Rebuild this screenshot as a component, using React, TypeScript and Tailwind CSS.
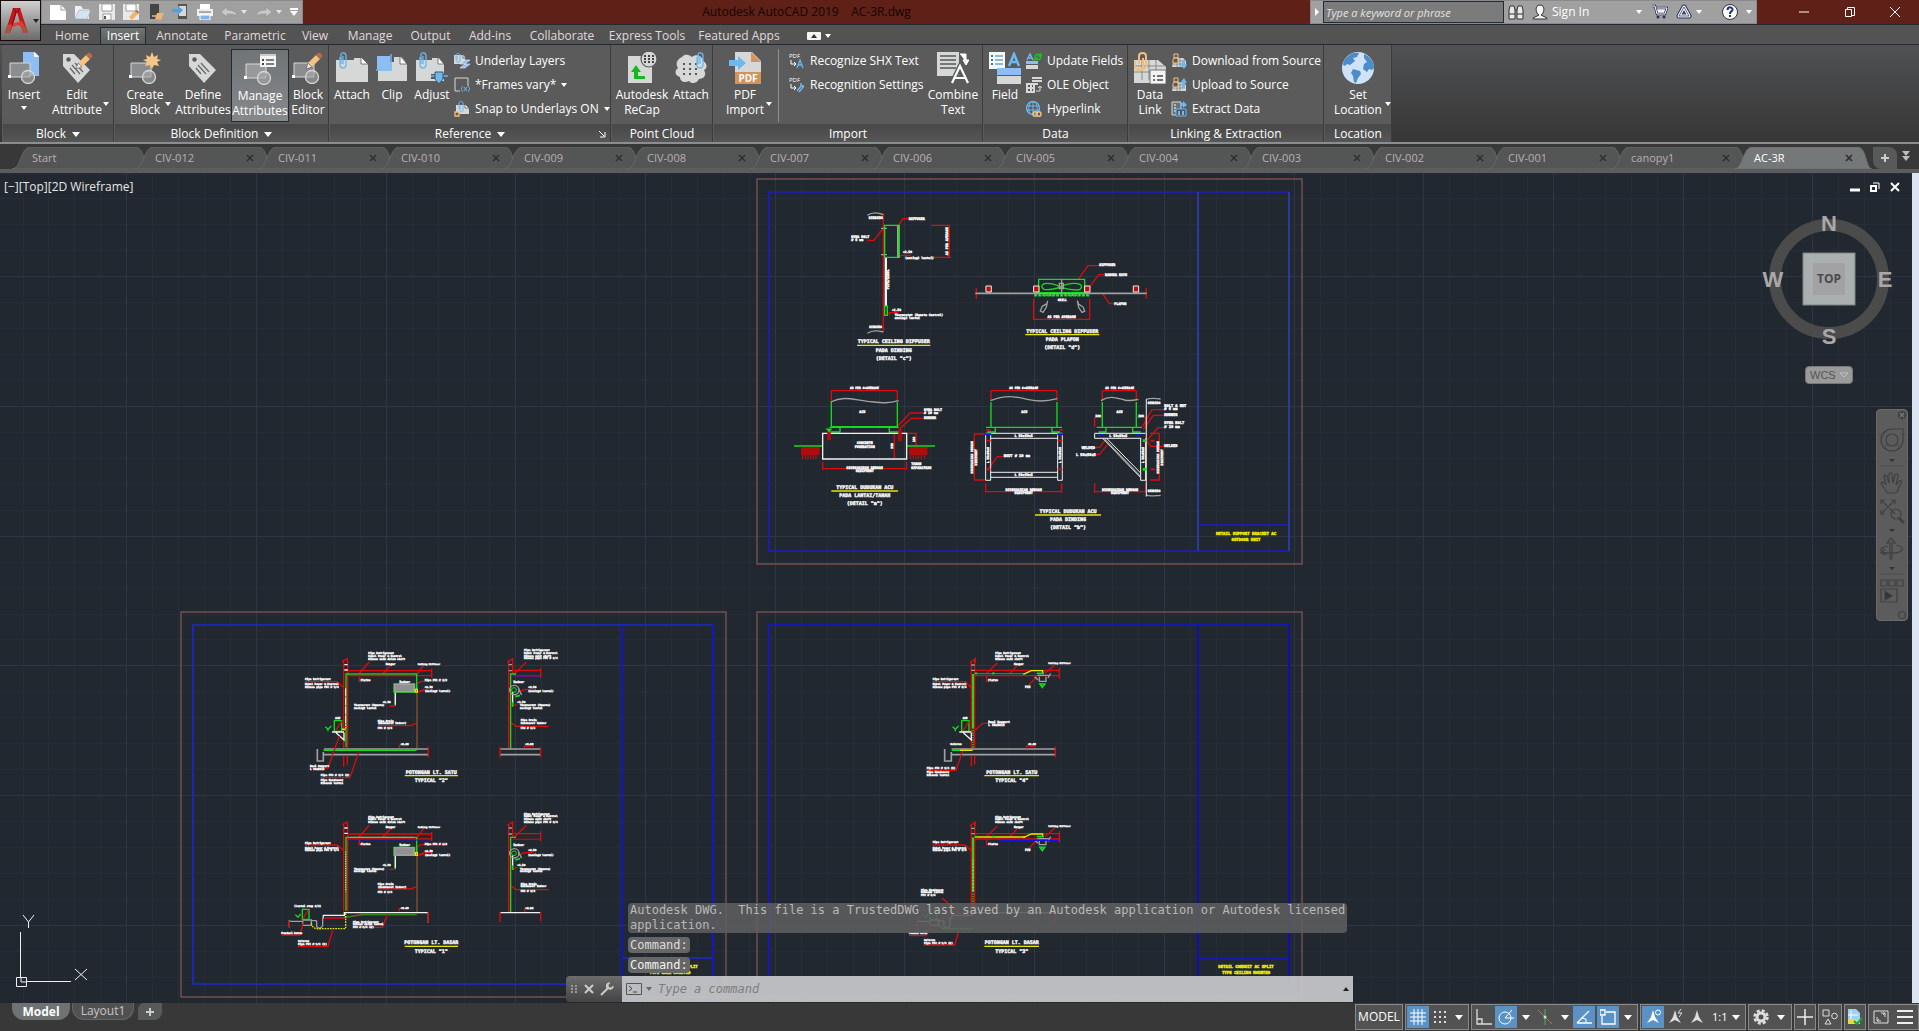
import React from "react";

type Kids = { children?: React.ReactNode };

/* ---------- shared icon bits ---------- */

const LIGHT = "#d6d8d8";
const SKY = "#6cb8f0";
const PEACH = "#f2be7c";

function Svg({ s = 32, children, className = "" }: Kids & { s?: number; className?: string }) {
  return (
    <svg width={s} height={s} viewBox={`0 0 ${s} ${s}`} fill="none" className={`shrink-0 ${className}`} aria-hidden="true">
      {children}
    </svg>
  );
}

function Caret({ className = "" }: { className?: string }) {
  return (
    <svg width="6" height="4" viewBox="0 0 6 4" className={`shrink-0 ${className}`} aria-hidden="true">
      <path d="M0 0h6L3 4z" fill="currentColor" />
    </svg>
  );
}

const Pencil = ({ x = 0, y = 0 }: { x?: number; y?: number }) => (
  <g transform={`translate(${x} ${y})`}>
    <path d="M2 11L10 3l4 4-8 8z" fill="#f5c27f" />
    <path d="M10 3l2-2c1.500-1.500 5.500 2 4 4l-2 2z" fill="#b9694a" />
    <path d="M2 11l4 4-6 2z" fill="#e6e6e6" stroke="#555" strokeWidth="0.6" />
  </g>
);
const Clip = ({ x = 0, y = 0 }: { x?: number; y?: number }) => (
  <path
    transform={`translate(${x} ${y})`}
    d="M5 4v8M2 5v8c0 4 6 4 6 0V4c0-4-5-4-5-1v9"
    stroke={SKY}
    strokeWidth="1.300"
  />
);
const BlockShape = ({ fill = "#8b8d8f" }: { fill?: string }) => (
  <>
    <path d="M2 11h20v14H2z" fill={fill} stroke={LIGHT} />
    <circle cx="20" cy="25" r="6.500" fill="#a6a8a9" fillOpacity="0.6" stroke={LIGHT} strokeWidth="1.300" />
    <path d="M0 23h3v3H0z" fill="#fff" />
  </>
);
const Tag = () => (
  <>
    <path d="M2 2h11l16 16-12 13L2 14z" fill={LIGHT} />
    <circle cx="7.500" cy="7.500" r="2.200" fill="#5a5a5a" />
    <path d="M11 13l8 9M14 11l8 9M9 16l5 6" stroke="#666" strokeWidth="1.200" />
  </>
);
const Sheet = ({ d, fold }: { d: string; fold: string }) => (
  <>
    <path d={d} fill={LIGHT} />
    <path d={fold} fill="#fff" stroke="#5a5a5a" strokeWidth="0.8" />
  </>
);

const icons = {
  insert: (
    <Svg>
      <path d="M15 0h12l4 4v20H15z" fill="#8ebdf4" />
      <path d="M26 0v5h5z" fill="#fff" />
      <BlockShape />
    </Svg>
  ),
  editAttr: (
    <Svg>
      <Tag />
      <Pencil x={15} y={0} />
    </Svg>
  ),
  create: (
    <Svg>
      <BlockShape />
      <path d="M23 0l2 5 4-2-1 4 4 1-4 2 2 4-5-1-2 4-2-4-5 1 2-4-4-2 4-1-1-4 4 2z" fill="#f6c684" />
    </Svg>
  ),
  define: (
    <Svg>
      <Tag />
    </Svg>
  ),
  manage: (
    <Svg>
      <BlockShape fill="#98999b" />
      <path d="M16 1h16v13H16z" fill="#f4f4f4" />
      <path d="M16 1h16v2H16z" fill="#c9cccd" />
      <path d="M18 6h2v2h-2zM18 10h2v2h-2z" fill="#444" />
      <path d="M22 7h8M22 11h8" stroke="#555" strokeWidth="1.300" />
    </Svg>
  ),
  editor: (
    <Svg>
      <BlockShape />
      <Pencil x={14} y={0} />
    </Svg>
  ),
  attach: (
    <Svg>
      <Sheet d="M0 8h18V6h8l6 6v18H0z" fold="M25 5v7h7z" />
      <Clip x={2} y={0} />
    </Svg>
  ),
  clip: (
    <Svg>
      <Sheet d="M2 10h16V5h8l5 7v17H2z" fold="M24 4v8h7z" />
      <path d="M1 4h13v13H1z" fill="#8ebdf4" />
      <path d="M15 2v16H0" stroke={SKY} strokeWidth="1.500" />
    </Svg>
  ),
  adjust: (
    <Svg>
      <Sheet d="M0 8h16V6h7l5 6v17H0z" fold="M22 5v7h6z" />
      <Clip x={2} y={0} />
      <path d="M15 22h17v5H15z" fill="#5a5a5a" />
      <path d="M15 24h17" stroke={SKY} strokeWidth="1.500" />
      <path d="M19 20h8v7l-4 5-4-5z" fill={SKY} stroke="#456" />
    </Svg>
  ),
  recap: (
    <Svg>
      <path d="M2 4h24v27H2z" fill={LIGHT} />
      <circle cx="23" cy="7" r="8" fill={LIGHT} stroke="#5a5a5a" strokeWidth="1.200" />
      <path d="M18 4h11M18 7h11M18 10h11" stroke="#444" strokeWidth="2" strokeDasharray="2 2" />
      <path d="M10 13l5 7h-3v4h7v3H8v-7H5z" fill="#16b81c" />
    </Svg>
  ),
  cloud: (
    <Svg>
      <path d="M7 5c3-4 8-2 10 0 4-4 11-1 11 4 4 2 5 7 1 9 3 5 0 9-5 9-2 5-8 5-10 2-4 2-9 1-9-4-5-1-6-6-2-9-3-4-1-9 4-11z" fill={LIGHT} />
      <path d="M8 12h17M8 17h17M8 22h17" stroke="#555" strokeWidth="2" strokeDasharray="2 4" />
      <Clip x={20} y={0} />
    </Svg>
  ),
  pdf: (
    <Svg>
      <path d="M6 0h17l9 9v23H6z" fill={LIGHT} />
      <path d="M22 0l10 10H22z" fill="#d5925a" />
      <path d="M6 20h26v12H6z" fill="#d5925a" />
      <path d="M0 8h9V4l8 7-8 7v-4H0z" fill={SKY} />
      <text x="19" y="30" textAnchor="middle" fontSize="10" fontWeight="700" fill="#fff">PDF</text>
    </Svg>
  ),
  combine: (
    <Svg>
      <path d="M0 0h22v24H0z" fill={LIGHT} />
      <path d="M3 4h16M3 8h16M3 12h16M3 16h16" stroke="#555" strokeWidth="1.300" />
      <path d="M23 2h6v8M26 8l3 5 3-5z" stroke="#fff" fill="#fff" />
      <path d="M15 31l8-17 8 17M18 26h10" stroke="#5a5a5a" strokeWidth="5" />
      <path d="M15 31l8-17 8 17M18 26h10" stroke="#fff" strokeWidth="2.200" />
    </Svg>
  ),
  field: (
    <Svg>
      <path d="M0 0h16v17H0z" fill="#f4f6f8" />
      <path d="M2 4h2M2 8h2M2 12h2" stroke="#2c78b8" strokeWidth="2" />
      <path d="M6 4h8M6 8h8M6 12h8" stroke="#2c78b8" strokeWidth="1.200" />
      <path d="M8 16h24v7H8z" fill="#8ebdf4" />
      <path d="M8 24h24v8H8z" fill={LIGHT} />
      <path d="M20 14l5-12 5 12M22 10h6" stroke={SKY} strokeWidth="2.500" />
    </Svg>
  ),
  dataLink: (
    <Svg>
      <path d="M0 8h24l8 7v16H0z" fill={LIGHT} />
      <path d="M0 14h30M0 20h30M8 8v20M15 8v20M22 8v20" stroke="#888" />
      <path d="M5 12V4c0-4 7-4 7 0v9c0 5-6 5-8 3M9 6v9c0 5-8 4-8-1V9" stroke={PEACH} strokeWidth="2" />
      <path d="M16 18h16v14H16z" fill="#f4f4f4" stroke="#555" strokeWidth="0.8" />
      <path d="M19 24h2M19 28h2M23 24h6M23 28h6" stroke="#444" strokeWidth="1.500" />
    </Svg>
  ),
  globe: (
    <Svg>
      <circle cx="16" cy="16" r="16" fill="#cfe2f7" />
      <path d="M4 6c4-5 9-6 13-5l-2 4-4 1 2 3-5 4-3-1-2 2-2-1c0-3 1-5 3-7zM22 2c6 2 10 8 10 14l-2 2-3-1-2 3-4-3 1-5 3-2-3-4zM11 17l7 2 1 3-3 4-2 5-2-1-1-6-2-3z" fill="#4b8dcb" />
    </Svg>
  ),
  underlay: (
    <Svg s={16}>
      <Sheet d="M0 2h9l2 3v6H0z" fold="M9 1v4h3z" />
      <path d="M3 3v5c0 2 3 2 3 0V2c0-2-4-2-4 0v5" stroke={SKY} />
      <path d="M6 11l5-4h5l-5 4zM6 15l5-4h5l-5 4z" fill="#8ebdf4" stroke="#e8f1fb" strokeWidth="0.6" />
    </Svg>
  ),
  frames: (
    <Svg s={16}>
      <path d="M14 9V1H1v13h5" stroke={LIGHT} />
      <path d="M9 9c-2 2-2 4 0 6M14 9c2 2 2 4 0 6M10 10l3 4M13 10l-3 4" stroke={SKY} />
    </Svg>
  ),
  snap: (
    <Svg s={16}>
      <Sheet d="M2 4h9l4 3v6H2z" fold="M11 3v4h4z" />
      <path d="M6 4v5c0 2 3 2 3 0V2c0-2-4-2-4 0v6" stroke={SKY} />
      <path d="M1 11h4v4H1z" fill="#5a5a5a" stroke={PEACH} strokeWidth="1.300" />
    </Svg>
  ),
  shx: (
    <Svg s={16}>
      <text x="0" y="5" fontSize="6" fill="#fff">PDF</text>
      <path d="M2 7v4h4M5 9l2 2-2 2" stroke="#fff" />
      <path d="M8 15l3-8 3 8M9 12h4" stroke={SKY} strokeWidth="1.300" />
    </Svg>
  ),
  recSet: (
    <Svg s={16}>
      <text x="0" y="5" fontSize="6" fill="#fff">PDF</text>
      <path d="M2 7v4h4M5 9l2 2-2 2" stroke="#fff" />
      <path d="M8 14l5-6M12 6v3h3M10 15l5-6" stroke={SKY} strokeWidth="1.500" />
    </Svg>
  ),
  update: (
    <Svg s={16}>
      <path d="M1 7l3-6 3 6M2 5h4" stroke={SKY} strokeWidth="1.500" />
      <path d="M9 4c1-4 5-3 6-1M15 4c-1 4-5 3-6 1M15 0v3h-3M9 8V5h3" stroke="#16c81c" strokeWidth="1.300" />
      <path d="M0 8h12v3H0z" fill="#8ebdf4" />
      <path d="M0 12h12v4H0z" fill={LIGHT} />
    </Svg>
  ),
  ole: (
    <Svg s={16}>
      <path d="M6 1h10M6 4h10M6 7h6" stroke={LIGHT} strokeWidth="2" />
      <path d="M0 6h9v10H0z" fill={LIGHT} />
      <path d="M2 9h2M6 9h1M2 13h2M6 13h1" stroke="#555" strokeWidth="2" />
      <path d="M10 14h4V9M12 11l2-2 2 2" stroke={LIGHT} />
    </Svg>
  ),
  hyper: (
    <Svg s={16}>
      <circle cx="7" cy="7" r="6.500" stroke={SKY} strokeWidth="1.300" />
      <path d="M1 5h12M1 9h12M7 1v13M5 1c-3 4-3 9 0 13M9 1c3 4 3 9 0 13" stroke={SKY} />
      <path d="M7 13c0-3 4-3 4 0s-4 3-4 0zM11 13c0-3 4-3 4 0s-4 3-4 0z" stroke={PEACH} strokeWidth="1.500" />
    </Svg>
  ),
  down: (
    <Svg s={16}>
      <path d="M3 5h9l3 3v6H1z" fill={LIGHT} />
      <path d="M2 8h12M2 11h12M6 5v9M9 5v9" stroke="#777" strokeWidth="0.7" />
      <path d="M3 1h4v4H3zM3 5h4v5H2V7z" fill="#5a5a5a" stroke={PEACH} />
      <path d="M11 7h3v4h2l-3 5-4-5h2z" fill={SKY} />
    </Svg>
  ),
  up: (
    <Svg s={16}>
      <path d="M3 5h9l3 3v6H1z" fill={LIGHT} />
      <path d="M2 8h12M2 11h12M6 5v9M9 5v9" stroke="#777" strokeWidth="0.7" />
      <path d="M3 1h4v4H3zM3 5h4v5H2V7z" fill="#5a5a5a" stroke={PEACH} />
      <path d="M11 11h3V6h2l-3-5-4 5h2z" fill={SKY} />
    </Svg>
  ),
  extract: (
    <Svg s={16}>
      <path d="M1 1h9v13H1z" fill="#6d7274" stroke={LIGHT} />
      <path d="M9 2h3V0l4 4-4 3V5H9z" fill={SKY} />
      <path d="M3 4h2M3 7h2M3 10h2" stroke="#fff" />
      <path d="M5 8h10v7H5z" fill="#3a5a78" stroke={SKY} />
      <path d="M7 11h2M11 11h2M7 13h2M11 13h2" stroke="#fff" />
    </Svg>
  ),
};

/* ---------- title bar ---------- */

function QuickAccess() {
  const items: [string, React.ReactNode][] = [
    ["New", <><path d="M0 1h11l5 5v10H0z" fill="#fff" /><path d="M11 1v5h5" stroke="#999" /></>],
    ["Open", <><path d="M1 15V2h6l2 3h6v10z" fill="#f2f2f2" /><path d="M1 15l4-9h12l-4 9z" fill="#d3e4f5" stroke="#8a9aaa" strokeWidth="0.5" /></>],
    ["Save", <><path d="M0 0h16v16H0z" fill="#e9e9e9" /><path d="M3 0h10v7H3zM4 10h8v6H4z" fill="#fff" stroke="#888" strokeWidth="0.8" /><path d="M5 12h2v3H5z" fill="#555" /></>],
    ["Save As", <><path d="M0 0h16v16H0z" fill="#e9e9e9" /><path d="M3 0h10v7H3z" fill="#fff" stroke="#888" strokeWidth="0.8" /><path d="M6 13l6-6 3 3-6 6z" fill="#f0b46c" /><path d="M12 7l2-1 2 2-1 2z" fill="#b9694a" /></>],
    ["Open from Mobile", <><path d="M2 0h9v15H2z" fill="#444" /><path d="M4 12h5" stroke="#fff" /><path d="M7 15l2-6h7l-3 7z" fill="#f0b46c" /></>],
    ["Save to Mobile", <><path d="M6 0h9v15H6z" fill="#555" /><path d="M7 2h7v10H7z" fill="#d8d8d8" /><path d="M0 5h6V2l5 4-5 5V8H0z" fill="#4aa3e8" /></>],
    ["Plot", <><path d="M3 0h10v5H3z" fill="#fff" /><path d="M0 5h16v7H0z" fill="#efefef" /><path d="M2 8h12" stroke="#666" /><path d="M3 11h10v5H3z" fill="#7fb2ee" stroke="#fff" /></>],
    ["Undo", <path d="M0 8l6-5v3c6 0 9 2 10 6-3-2-6-2-10-2v3z" fill="#c9c9c9" stroke="#888" strokeWidth="0.5" />],
    ["Redo", <path d="M16 8l-6-5v3c-6 0-9 2-10 6 3-2 6-2 10-2v3z" fill="#c9c9c9" stroke="#888" strokeWidth="0.5" />],
  ];
  return (
    <div className="flex h-6 w-[262px] items-center justify-between border border-[#8a8a8a] bg-[#a0a0a0] pl-2 pr-1 text-white">
      {items.map(([label, art]) => (
        <button key={label} aria-label={label} className="flex items-center gap-1">
          <Svg s={16}>{art}</Svg>
          {(label === "Undo" || label === "Redo") && <Caret className="text-[#e2e2e2]" />}
        </button>
      ))}
      <button aria-label="Customize">
        <Svg s={8}><path d="M0 0h8v2H0zM0 3h8L4 8z" fill="#fff" /></Svg>
      </button>
    </div>
  );
}

function TitleBar() {
  return (
    <header className="flex h-6 bg-[#5e2017] pl-[41px]">
      <QuickAccess />
      <h1 className="flex flex-1 items-center justify-center text-xs whitespace-pre text-[#140503]">
        Autodesk AutoCAD 2019{"    "}AC-3R.dwg
      </h1>
      <div className="flex h-6 w-[447px] items-center border border-[#8a8a8a] bg-[#a0a0a0] text-white">
        <Svg s={12}><path d="M4 2v8l4-4z" fill="#fff" /></Svg>
        <input aria-label="Search" placeholder="Type a keyword or phrase" className="h-[22px] w-[181px] border border-[#222a33] bg-[#7b7b7b] px-0.5 text-[11px] italic text-white outline-none placeholder:text-[#e2e2e2]" />
        <button aria-label="Find" className="ml-1">
          <Svg s={16}><path d="M2 2h4l1 4v9H1V6zM10 2h4l1 4v9H9V6z" fill="#e8e8e8" stroke="#333" /><path d="M1 10h6M9 10h6M7 6h2" stroke="#333" /></Svg>
        </button>
        <button className="ml-2 flex flex-1 items-center gap-1 text-xs">
          <Svg s={16}><path d="M8 1c6 0 4 9 1 10l6 3v1H1v-1l6-3C4 10 2 1 8 1z" fill="#f4f4f4" stroke="#333" /></Svg>
          Sign In
          <Caret className="ml-auto" />
        </button>
        <button aria-label="App Store" className="ml-2.5">
          <Svg s={16}><path d="M0 2h3l2 8h8l2-6H5" stroke="#26305a" strokeWidth="2.500" fill="#f4f4f4" /><path d="M0 2h3l2 8h8l2-6H5" stroke="#fff" /><circle cx="6" cy="13" r="1.500" fill="#26305a" /><circle cx="12" cy="13" r="1.500" fill="#26305a" /></Svg>
        </button>
        <button aria-label="Autodesk" className="ml-2 flex items-center gap-1">
          <Svg s={16}><path d="M8 3l5 9H3z" stroke="#26305a" strokeWidth="5" strokeLinejoin="round" /><path d="M8 3l5 9H3z" stroke="#f4f4f4" strokeWidth="3" strokeLinejoin="round" /><path d="M8 3l5 9H3z" stroke="#26305a" strokeWidth="0.7" /></Svg>
          <Caret />
        </button>
        <button aria-label="Help" className="ml-5 mr-1 flex items-center gap-2">
          <Svg s={16}><circle cx="8" cy="8" r="7.500" fill="#fff" stroke="#333" /><path d="M5.500 6c0-4 5.500-3 5 0-.5 1.500-2.500 1.500-2.500 4M8 11v2" stroke="#1b2d7c" strokeWidth="2" /></Svg>
          <Caret />
        </button>
      </div>
      <div className="flex w-[162px] items-center justify-between pl-[41px] pr-[18px] text-white">
        <button aria-label="Minimize"><Svg s={12}><path d="M1 6h10" stroke="#fff" /></Svg></button>
        <button aria-label="Restore"><Svg s={12}><path d="M1.500 3.500h6v7h-6zM3.500 3.500v-2h7v8h-3" stroke="#fff" /></Svg></button>
        <button aria-label="Close"><Svg s={12}><path d="M1 1l10 10M11 1L1 11" stroke="#fff" /></Svg></button>
      </div>
    </header>
  );
}

function AppButton() {
  return (
    <button aria-label="Application menu" className="absolute left-0 top-0 flex h-[41px] w-[41px] items-center border border-[#1a0a08] bg-linear-to-b from-[#d0d0d0] to-[#6c6c6c] pl-1">
      <svg width="24" height="28" viewBox="0 0 24 28" aria-hidden="true">
        <path d="M0 26L8 1h7l8 25h-5L12 5 5 26z" fill="#c5161c" />
        <path d="M3 18l14-4 3 6-3 1-4-3-10 4z" fill="#e03a33" />
        <path d="M0 26l3-8 3 2-1 6zM16 20l4-1 3 7h-5z" fill="#a8553d" />
        <path d="M8 1l3 4-4 14M15 1l-3 5" stroke="#7c0d10" fill="none" />
      </svg>
      <Caret className="ml-1 text-[#222]" />
    </button>
  );
}

/* ---------- ribbon ---------- */

const menuTabs: [string, string][] = [
  ["Home", "w-[56px]"], ["Insert", "w-[46px]"], ["Annotate", "w-[72px]"], ["Parametric", "w-[74px]"], ["View", "w-[46px]"],
  ["Manage", "w-[64px]"], ["Output", "w-[57px]"], ["Add-ins", "w-[62px]"], ["Collaborate", "w-[82px]"], ["Express Tools", "w-[88px]"], ["Featured Apps", "w-[96px]"],
];

function MenuTabs() {
  return (
    <nav className="flex h-5 items-end border-t border-[#222a33] bg-[#535353] pl-[44px] text-xs text-[#e0d8dc]">
      {menuTabs.map(([t, w]) => (
        <button
          key={t}
          className={`${w} h-[17px] leading-4 whitespace-nowrap ${t === "Insert" ? "border border-b-0 border-[#222a33] bg-linear-to-b from-[#6f7474] to-[#5c5c5c] text-white" : ""}`}
        >
          {t}
        </button>
      ))}
      <button aria-label="Ribbon display" className="ml-5 flex h-[17px] items-center gap-1 text-white">
        <Svg s={14}><rect x="0" y="3" width="14" height="8" rx="1" fill="#f4f4f4" /><path d="M4 9h6L7 5z" fill="#333" /></Svg>
        <Caret />
      </button>
    </nav>
  );
}

function Big({ icon, lines, w, caret, active, below }: { icon: React.ReactNode; lines: string[]; w: string; caret?: string; active?: boolean; below?: boolean }) {
  return (
    <button className={`relative flex ${w} mt-1 h-[73px] shrink-0 flex-col items-center whitespace-nowrap pt-[3px] leading-[15px] ${active ? "border border-[#222a33] bg-linear-to-b from-[#707476] to-[#86898b]" : ""}`}>
      {icon}
      <span className="mt-[3px]">{lines[0]}</span>
      {lines[1] && <span>{lines[1]}</span>}
      {below && <Caret className="mt-1" />}
      {caret && <Caret className={`absolute top-[53px] ${caret}`} />}
    </button>
  );
}

function Row({ icon, label, caret }: { icon: React.ReactNode; label: string; caret?: boolean }) {
  return (
    <button className="flex h-6 items-center gap-[5px] whitespace-nowrap">
      {icon}
      {label}
      {caret && <Caret />}
    </button>
  );
}

function Panel({ title, w, arrow, corner, children }: Kids & { title: string; w: string; arrow?: boolean; corner?: boolean }) {
  return (
    <section className={`${w} flex shrink-0 flex-col border-r border-[#3c3c3c] bg-[#5b5b5b] pl-px`}>
      <div className="flex h-[79px]">{children}</div>
      <h2 className="relative flex flex-1 items-center justify-center gap-1.5 bg-linear-to-b from-[#484848] to-[#565656] pt-0.5">
        {title}
        {arrow && <Svg s={8}><path d="M0 2h8L4 7z" fill="#fff" /></Svg>}
        {corner && <Svg s={8} className="absolute right-1"><path d="M1 1l5 5M7 2v5H2" stroke="#fff" /></Svg>}
      </h2>
    </section>
  );
}

const List = ({ children }: Kids) => <div className="flex flex-col pt-1">{children}</div>;

function Ribbon() {
  return (
    <div className="flex h-[100px] border-t border-b-2 border-[#222a33] border-b-[#8a8e90] bg-linear-to-b from-[#505253] to-[#363636] pl-0.5 text-xs text-white">
      <Panel title="Block" w="w-[112px]" arrow>
        <Big w="w-[42px]" icon={icons.insert} lines={["Insert"]} below />
        <Big w="w-[64px]" icon={icons.editAttr} lines={["Edit", "Attribute"]} caret="right-0" />
      </Panel>
      <Panel title="Block Definition" w="w-[215px]" arrow>
        <Big w="w-[60px]" icon={icons.create} lines={["Create", "Block"]} caret="right-1" />
        <Big w="w-[56px]" icon={icons.define} lines={["Define", "Attributes"]} />
        <Big w="w-[58px]" icon={icons.manage} lines={["Manage", "Attributes"]} active />
        <Big w="w-[38px]" icon={icons.editor} lines={["Block", "Editor"]} />
      </Panel>
      <Panel title="Reference" w="w-[282px]" arrow corner>
        <Big w="w-[44px]" icon={icons.attach} lines={["Attach"]} />
        <Big w="w-[36px]" icon={icons.clip} lines={["Clip"]} />
        <Big w="w-[44px]" icon={icons.adjust} lines={["Adjust"]} />
        <List>
          <Row icon={icons.underlay} label="Underlay Layers" />
          <Row icon={icons.frames} label="*Frames vary*" caret />
          <Row icon={icons.snap} label="Snap to Underlays ON" caret />
        </List>
      </Panel>
      <Panel title="Point Cloud" w="w-[102px]">
        <Big w="w-[60px]" icon={icons.recap} lines={["Autodesk", "ReCap"]} />
        <Big w="w-[38px]" icon={icons.cloud} lines={["Attach"]} />
      </Panel>
      <Panel title="Import" w="w-[270px]">
        <Big w="w-[62px]" icon={icons.pdf} lines={["PDF", "Import"]} caret="right-1" />
        <div className="ml-0.5 mt-1 mr-2.5 h-[73px] w-px bg-[#909090]" />
        <List>
          <Row icon={icons.shx} label="Recognize SHX Text" />
          <Row icon={icons.recSet} label="Recognition Settings" />
        </List>
        <div className="flex-1" />
        <Big w="w-[58px]" icon={icons.combine} lines={["Combine", "Text"]} />
      </Panel>
      <Panel title="Data" w="w-[145px]">
        <Big w="w-[42px]" icon={icons.field} lines={["Field"]} />
        <List>
          <Row icon={icons.update} label="Update Fields" />
          <Row icon={icons.ole} label="OLE Object" />
          <Row icon={icons.hyper} label="Hyperlink" />
        </List>
      </Panel>
      <Panel title="Linking & Extraction" w="w-[196px]">
        <Big w="w-[42px]" icon={icons.dataLink} lines={["Data", "Link"]} />
        <List>
          <Row icon={icons.down} label="Download from Source" />
          <Row icon={icons.up} label="Upload to Source" />
          <Row icon={icons.extract} label="Extract  Data" />
        </List>
      </Panel>
      <Panel title="Location" w="w-[68px]">
        <Big w="w-[66px]" icon={icons.globe} lines={["Set", "Location"]} caret="right-0" />
      </Panel>
    </div>
  );
}

/* ---------- drawing file tabs ---------- */

const files = ["Start", "CIV-012", "CIV-011", "CIV-010", "CIV-009", "CIV-008", "CIV-007", "CIV-006", "CIV-005", "CIV-004", "CIV-003", "CIV-002", "CIV-001", "canopy1", "AC-3R"];

function FileTabs() {
  return (
    <div className="flex h-[29px] items-start border-b-4 border-[#5c5c5c] bg-[#383838] pt-[3px] pl-5 text-[11px]">
      {files.map((f) => {
        const on = f === "AC-3R";
        return (
          <div key={f} className={`relative flex h-[22px] w-[123px] min-w-0 items-center justify-between px-3 ${on ? "text-white" : "text-[#bcaeb2]"}`}>
            <svg className="absolute -left-2 top-0 h-full w-[138px]" viewBox="0 0 134 22" preserveAspectRatio="none" aria-hidden="true">
              <path d="M0 22C9 22 8 0 18 0H120C129 0 128 22 134 22z" fill={on ? "#747878" : "#545656"} stroke="#6a6d6d" strokeWidth="0.8" />
            </svg>
            <button className="relative">{f}</button>
            {f !== "Start" && (
              <button aria-label={`Close ${f}`} className="relative">
                <Svg s={8}><path d="M1 1l6 6M7 1L1 7" stroke="#2e2e2e" strokeWidth="1.600" /></Svg>
              </button>
            )}
          </div>
        );
      })}
      <button aria-label="New tab" className="ml-2 flex h-[22px] w-6 items-center justify-center rounded-tr-lg rounded-bl-lg bg-[#585a5a]">
        <Svg s={8}><path d="M4 0v8M0 4h8" stroke="#ccc" strokeWidth="2" /></Svg>
      </button>
      <button aria-label="More tabs" className="ml-auto mr-2 pt-1">
        <Svg s={10}><path d="M1 0h8L5 5zM1 5h8l-4 5z" fill="#bbb" /></Svg>
      </button>
    </div>
  );
}

/* ---------- CAD geometry ---------- */

const R = "#dc0c0c";
const G = "#14dc1c";
const W = "#f2f2f2";
const Y = "#e6e600";
const B = "#1414e0";
const GR = "#a0a0a0";
const BR = "#7b5050";

function P({ d, c = R, w = 4, f = "none", dash }: { d: string; c?: string; w?: number; f?: string; dash?: string }) {
  return <path d={d} stroke={c} strokeWidth={w} fill={f} strokeDasharray={dash} />;
}
function T({ x, y, t, s = 10, c = W, a = "start" }: { x: number; y: number; t: string | string[]; s?: number; c?: string; a?: "start" | "middle" }) {
  const lines = Array.isArray(t) ? t : [t];
  return (
    <>
      {lines.map((l, i) => (
        <text key={i} x={x} y={y + i * s} fontSize={s} fontWeight="700" fill={c} stroke={c} strokeWidth="1.400" textAnchor={a} fontFamily="'DejaVu Sans Mono', monospace">
          {l}
        </text>
      ))}
    </>
  );
}
function V({ x, y, t, s = 9 }: { x: number; y: number; t: string; s?: number }) {
  return (
    <g transform={`translate(${x} ${y}) rotate(-90)`}>
      <T x={0} y={0} t={t} s={s} a="middle" />
    </g>
  );
}
function Title({ x, y, a, b, c, w }: { x: number; y: number; a: string; b: string; c?: string; w: number }) {
  return (
    <>
      <T x={x} y={y} t={a} s={15} a="middle" />
      <P d={`M${x - w / 2} ${y + 6}h${w}`} c={Y} />
      <T x={x} y={y + 25} t={b} s={15} a="middle" />
      {c && <T x={x} y={y + 49} t={c} s={15} a="middle" />}
    </>
  );
}

function Frame({ x, y, caption, c = B, side = B }: { x: number; y: number; caption: string[]; c?: string; side?: string }) {
  return (
    <g transform={`translate(${x} ${y})`}>
      <rect width="545" height="385" fill="none" stroke={BR} strokeWidth="1.400" />
      <path d="M12 13H532V372H12zM441 346h91" fill="none" stroke={c} strokeWidth="1.600" />
      <path d="M441 13v359M532 13v359" stroke={side} strokeWidth="2" />
      <g transform="translate(489 356)">
        {caption.map((l, i) => (
          <text key={l} y={i * 6} fontSize="4" fontWeight="700" fill={Y} stroke={Y} strokeWidth="0.5" textAnchor="middle" fontFamily="'DejaVu Sans Mono', monospace">{l}</text>
        ))}
      </g>
    </g>
  );
}

function Foundation() {
  return (
    <>
      <P d="M154 602h198M154 602v30M352 602v30M128 815v24M380 815v24M128 836h252M343 732v74M408 732v36M360 730h50M430 669h-40l-42 45M430 685h-36l-36 32" />
      <P d="M152 636c40-20 70-6 110-2s60 8 94-2" c={GR} />
      <P d="M154 636v74h198v-74M148 712h208M150 726h30v-14M328 712v14h30M42 768h86M380 768h85" c={G} />
      <P d="M128 730h252v77H128z" c={W} w={4} />
      <P d="M64 772h54v22H64zM388 772h54v22h-54zM142 722h10v28h-10zM355 718h10v34h-10z" f="#b00c0c" w={1} />
      <P d="M68 794v14M76 794v14M84 794v14M92 794v14M100 794v14M108 794v12M392 794v14M400 794v14M408 794v14M416 794v14M424 794v14M434 794v12" w={3} />
      <P d="M142 718h10l-4 6z" c={G} w={5} />
      <T x={253} y={598} t="AS PER 4+AVERAGE" s={9} a="middle" />
      <T x={247} y={668} t="ACU" s={10} a="middle" />
      <T x={254} y={763} t={["CONCRETE", "FOUNDATION"]} s={10} a="middle" />
      <T x={254} y={836} t={["DISESUAIKAN DENGAN", "EQUIPMENT"]} s={10} a="middle" />
      <T x={432} y={662} t={["DYNA BOLT", "# 10 mm"]} s={10} />
      <T x={432} y={688} t="RUBBER" s={10} />
      <T x={394} y={826} t={["TANAH", "DIPADATKAN"]} s={10} />
      <V x={340} y={768} t="300" />
      <V x={405} y={748} t="100" />
      <Title x={254} y={897} a="TYPICAL DUDUKAN ACU" b="PADA LANTAI/TANAH" c={'(DETAIL "a")'} w={200} />
    </>
  );
}

function Bracket() {
  return (
    <>
      <P d="M633 602h198M633 602v30M831 602v30M583 732v138M583 732h32M583 870h32M617 880v28M845 880v28M617 905h228M624 838l28-38h18M618 720h14M838 720h10" />
      <P d="M632 632c50-20 80-10 110-4s50 8 90-2" c={GR} />
      <P d="M633 636v76h198v-76M618 712h228M622 726h24v-14M816 712v14h24" c={G} w={4} />
      <P d="M617 730h230v141h-14V730M617 730v141h15V730M632 745h199M632 847h199M632 862h199" c={W} w={3} />
      <P d="M612 733h22M832 733h18M960 733h14M1068 733h16" c={B} w={6} />
      <P d="M618 752h14M833 752h14M618 838h14M833 838h14" w={5} />
      <T x={731} y={598} t="AS PER 4+AVERAGE" s={9} a="middle" />
      <T x={733} y={668} t="ACU" s={10} a="middle" />
      <T x={731} y={742} t="L 50x50x5" s={10} a="middle" />
      <T x={731} y={859} t="L 50x50x5" s={10} a="middle" />
      <T x={671} y={802} t="BAUT # 10 mm" s={11} />
      <V x={628} y={795} t="L 50x50x5" />
      <V x={842} y={795} t="L 50x50x5" />
      <V x={580} y={802} t="DISESUAIKAN DENGAN" />
      <V x={592} y={802} t="EQUIPMENT" />
      <T x={731} y={902} t={["DISESUAIKAN DENGAN", "EQUIPMENT"]} s={10} a="middle" />

      <P d="M967 602h102M967 602v30M1069 602v30M944 682v30M944 682h24M1069 682h28v30M1138 730v140M1110 730h30M1110 870h30M944 880v28M1097 880v28M944 905h153M945 772h14l20-26M945 793h14l24-30M1152 659h-36l-28 50M1152 676h-32l-30 42M1152 713h-18l-34 40M1152 769h-40l-14-20" />
      <P d="M963 632c30-18 50-6 70-2s24 2 42-2M1098 628c12-4 26-4 44-1M1098 915c12 6 26 2 44 1" c={GR} />
      <P d="M967 636v76h102v-76M950 712h136M956 726h22v-14M1058 712v14h24" c={G} w={4} />
      <P d="M944 730h153M944 745h140M944 730v15M1082 745v126h15V745M1099 628v292M968 745l112 116M980 745l102 104" c={W} w={3} />
      <P d="M974 748l106 110" c={GR} w={4} />
      <P d="M1088 752h12M1088 838h12" c={G} w={8} />
      <P d="M1112 752h12M1112 838h12" w={6} />
      <T x={1019} y={598} t="AS PER 4+AVERAGE" s={9} a="middle" />
      <T x={1019} y={668} t="ACU" s={10} a="middle" />
      <T x={1015} y={742} t="L 50x50x5" s={10} a="middle" />
      <T x={946} y={680} t="100" s={9} />
      <T x={1075} y={680} t="100" s={9} />
      <T x={905} y={776} t="WELDED" s={11} />
      <T x={888} y={797} t="L 50x50x5" s={11} />
      <T x={1103} y={641} t="DINDING" s={9} />
      <T x={1103} y={905} t="DINDING" s={9} />
      <T x={1153} y={650} t={["BOLT & NUT", "# 6 mm"]} s={11} />
      <T x={1153} y={679} t="RUBBER" s={11} />
      <T x={1153} y={703} t={["DYNA BOLT", "# 10 mm"]} s={11} />
      <T x={1153} y={772} t="WELDED" s={11} />
      <V x={1092} y={795} t="L 50x50x5" />
      <V x={1136} y={802} t="DISESUAIKAN DENGAN" />
      <V x={1148} y={802} t="EQUIPMENT" />
      <T x={1020} y={902} t={["DISESUAIKAN DENGAN", "EQUIPMENT"]} s={10} a="middle" />
      <Title x={864} y={969} a="TYPICAL DUDUKAN ACU" b="PADA DINDING" c={'(DETAIL "b")'} w={198} />
    </>
  );
}

function Diffusers() {
  return (
    <>
      <P d="M310 70v356M385 86h-16l-18 26M262 151h20l26-34M454 106h56M508 106v96M454 202h58M356 202l8-6h26l6 8M328 376v-8h28" />
      <P d="M262 76c14-10 34-8 48-2M262 430c14-10 34-8 48-4M303 115h18M303 194h18" c={GR} />
      <P d="M316 202v146M319 202v146" c={W} />
      <P d="M314 106h44v96h-44zM355 106v96M314 348h8v28h-8z" c={G} />
      <P d="M353 108v94" c={GR} />
      <T x={266} y={86} t="DINDING" s={10} />
      <T x={268} y={415} t="DINDING" s={9} />
      <T x={386} y={89} t="DIFFUSER" s={10} />
      <T x={214} y={143} t={["DYNA BOLT", "# 6 mm"]} s={10} />
      <T x={369} y={188} t="+2.50" s={9} />
      <T x={375} y={206} t="(masing2 lantai)" s={9} />
      <V x={505} y={154} t="AS PER AVERAGE" s={10} />
      <V x={326} y={268} t="PIPA/KABEL" s={10} />
      <T x={336} y={362} t="+1.50" s={9} />
      <T x={344} y={377} t={["Thermostat (Remote Control)", "masing2 lantai"]} s={9} />
      <Title x={341} y={460} a="TYPICAL CEILING DIFFUSER" b="PADA DINDING" c={'(DETAIL "c")'} w={220} />

      <P d="M589 294v32M1099 294v32M958 227h-34l-28 40M974 254h-18l-26 36M1002 341h-14l-20-30M761 326v62h168v-62" />
      <P d="M586 310h514" c={GR} w={5} />
      <P d="M776 268h138v40H776zM790 282c20-6 40 4 52 8 14-6 40-14 60-6 6 8 0 16-10 16-20 0-36-4-50-8-16 4-36 10-50 6-8-4-8-12-2-16z" c={G} />
      <P d="M762 316h168" c={G} w={7} dash="10 3" />
      <P d="M766 314h160" c={GR} w={8} dash="3 8" />
      <P d="M845 268v40M838 280h12v16h-12zM803 332l-4 20-10 15-8-4 6-14 14-8M892 332l4 10 14 10 4 12-8 3-10-15z" c={GR} />
      <P d="M618 288h16v18h-16zM761 288h16v18h-16zM914 288h16v18h-16zM1060 288h16v18h-16z" f="#c00c0c" c={W} w={3} />
      <T x={958} y={229} t="DIFFUSER" s={10} />
      <T x={975} y={257} t="RANGKA KAYU" s={10} />
      <T x={1003} y={344} t="PLAFON" s={10} />
      <T x={847} y={332} t="GRILL" s={9} a="middle" />
      <T x={845} y={384} t="AS PER AVERAGE" s={10} a="middle" />
      <Title x={847} y={428} a="TYPICAL CEILING DIFFUSER" b="PADA PLAFON" c={'(DETAIL "d")'} w={222} />
    </>
  );
}

/* One floor section: wall at x=227, slab above, unit hung on the right wall. */
function RoomSection({ lower }: { lower?: boolean }) {
  return (
    <>
      <P d="M221 92v262M233 92v262M216 94l16-8v12M233 122h254M233 137h252M485 116v28M266 132l32-36M338 132l26-28M442 132l20-28M268 140v14h30M442 160l12-6h76M462 182l-18 4M105 155h96l22 18M325 287h98l18-8" />
      <P d="M441 160v196" c="#8a5230" w={4} />
      <P d="M228 130v222M228 132h212v48M372 162h62v24h-62zM376 188v40" c={G} w={4} />
      <P d="M227 175v120" c={W} w={3} dash={lower ? "3 4" : "24 3"} />
      <P d="M240 132h190" c={lower ? GR : "#8a5a20"} w={3} />
      <P d="M374 163h58v22h-58z" c={GR} f="#909090" />
      <P d="M376 188v36" c={W} w={4} />
      <P d="M223 120h10M223 104h10" c={W} />
      <P d="M436 178h6v8h-6z" c={Y} />
      <P d="M358 228h18M388 354v-8h28M448 184l14-6h24" />
      {lower && <P d="M236 140h246" c={B} dash="3 4" />}
      <T x={295} y={73} t={["Pipa Refrigerant", "Kabel Power & Kontrol", "Dibawa naik dalam shaft"]} s={8} />
      <T x={347} y={104} t="Hanger" s={8} />
      <T x={443} y={104} t="Ceiling Diffuser" s={7} />
      <T x={272} y={154} t="Plafon" s={8} />
      <T x={105} y={151} t="Pipa Refrigerant" s={8} />
      <T x={105} y={166} t={["Kabel Power & Kontrol", "Dibawa pipa PVC # 3/4"]} s={8} />
      <T x={388} y={158} t="Indoor" s={9} />
      <T x={464} y={154} t="Pipa PVC # 1/2" s={8} />
      <T x={464} y={175} t="+2.50" s={8} />
      <T x={464} y={187} t="(masing2 lantai)" s={8} />
      <T x={338} y={218} t="+1.50" s={8} />
      <T x={252} y={229} t={["Thermostat (Remote)", "masing2 lantai"]} s={8} />
      <T x={323} y={275} t={["Pipa Drain", "(Kondensat Indoor)"]} s={8} />
      <T x={323} y={298} t="PVC # 3/4" s={8} />
      <T x={392} y={346} t="+0.00" s={8} />
    </>
  );
}

function SideSection({ lower }: { lower?: boolean }) {
  return (
    <>
      <P d="M716 92v264M728 92v40M712 96l16-10v12M730 121h82M730 138h82M812 114v30M733 132l36-36M748 184l18-6h24M728 228l14-6M724 278l14 11h98M764 356v-8h28" />
      <P d="M722 130v228M724 132h14" c={G} w={4} />
      <P d="M728 186v34" c={W} w={4} />
      <P d="M728 216v14M736 200l14-4" c={G} w={5} />
      <circle cx="733" cy="180" r="14" fill="none" stroke={GR} strokeWidth="4" />
      <P d="M745 175l10 20M716 104h10M716 122h10" c={GR} />
      <circle cx="732" cy="180" r="7" fill="none" stroke={G} strokeWidth="3" />
      <P d="M730 139h80" c={lower ? "#8a1010" : B} w={3} dash="4 3" />
      <T x={762} y={64} t={["Pipa Refrigerant", "Kabel Power & Kontrol", "Dibawa naik shaft", "Dibawa pipa PVC # 3/4"]} s={8} />
      <T x={730} y={158} t="Indoor" s={9} />
      <T x={775} y={174} t="+2.50" s={8} />
      <T x={774} y={187} t="(masing2 lantai)" s={8} />
      <T x={742} y={218} t="+1.50" s={8} />
      <T x={750} y={229} t={["Thermostat (Remote)", "masing2 lantai"]} s={8} />
      <T x={752} y={274} t={["Pipa Drain", "Kondensat Indoor"]} s={8} />
      <T x={752} y={297} t="PVC # 3/4" s={8} />
      <T x={766} y={346} t="+0.00" s={8} />
    </>
  );
}

function Condenser() {
  return (
    <>
      <P d="M193 272h22v32h-22z" c={G} w={4} />
      <P d="M166 290l8 8 10-10M174 298v6" c={G} w={4} />
      <P d="M197 302l18-28" />
      <P d="M186 306h36M198 308l24 22v-22" c={W} w={4} />
      <T x={196} y={268} t="ACU" s={8} />
    </>
  );
}

function LowerPipes() {
  return (
    <>
      <P d="M160 866v-10h63v-8h252" c={W} />
      <P d="M160 864h62l50-10h168" c={R} />
      <P d="M220 862l60-8h160" c="#2f8a20" />
      <P d="M58 874h40v12h26v-16h-26" c={GR} />
      <P d="M140 872v18c6 8 18 4 18-4v-24M124 872h16M58 870v22M475 846v32" c={GR} />
      <P d="M97 838h20v30H97zM76 854l8 8 8-10" c={G} w={4} />
      <P d="M124 880c4 20 20 16 40 16h63V850" c={Y} dash="5 3" />
      <P d="M58 872v22M475 846v32M35 915h55l10-38M84 949h90l14-48M250 892h88l14-40M99 866l16-26" />
      <T x={72} y={830} t="(lantai atap 2/3)" s={8} />
      <T x={34} y={913} t="Pondasi beton" s={8} />
      <T x={84} y={937} t={["Saluran", "Pipa PVC # 3/4 (k)"]} s={8} />
      <T x={249} y={878} t={["Pipa Refrigerant", "Dibawa dalam lantai", "PVC # 3/4 (k)"]} s={8} />
    </>
  );
}

function LeftSheet() {
  return (
    <g transform="translate(270 630) scale(0.3333)">
      <RoomSection />
      <Condenser />
      <P d="M162 357h312M162 374h312M142 357v36h18V366" c={GR} w={5} />
      <P d="M160 361h280" c={G} w={4} />
      <P d="M475 350v32M221 376v34M232 376v28M120 414h54l34-96M152 443h88l26-76M218 290h10" />
      <P d="M216 298h10" c={Y} w={5} />
      <T x={120} y={411} t={["Besi Support", "L 50x50x5"]} s={8} />
      <T x={152} y={439} t="Pipa PVC # 3/4 (k)" s={8} />
      <T x={152} y={453} t={["Pipa Kondensat", "Dibawah lantai"]} s={8} />
      <Title x={484} y={431} a="POTONGAN LT. SATU" b={'TYPICAL "2"'} w={160} />
      <SideSection />
      <P d="M690 357h122M690 374h122" c={GR} w={5} />
      <P d="M690 350v32M812 352v30" />
      <g transform="translate(0 490)">
        <RoomSection lower />
        <SideSection lower />
      </g>
      <P d="M690 848h122" c={W} />
      <P d="M690 846v30M812 846v28" />
      <LowerPipes />
      <Title x={484} y={943} a="POTONGAN LT. DASAR" b={'TYPICAL "1"'} w={160} />
    </g>
  );
}

function CeilingSection({ lower }: { lower?: boolean }) {
  return (
    <>
      <P d="M334 92v262M344 92v262M330 98l16-12v12M345 121h254M345 137h252M598 114v32M380 130l32-32M450 130l24-26M555 130l30-26M380 138v16h30M506 166l24-26M218 155h98l18 18" />
      <P d="M339 132v164" c={G} w={6} />
      <P d="M339 200v100" c={W} w={2} dash={lower ? "4 6" : "1 20"} />
      <P d="M345 131h150" c={lower ? Y : "#2f8a20"} />
      <P d="M490 133l24-11h34v8" c={Y} w={4} />
      <P d="M344 130h8M396 130h8M530 130h22M540 162h14l-7 10z" c={G} w={5} />
      <P d="M524 140l10 10M572 130l-8 14M532 136h34M538 140v14h20v-14" c={GR} w={4} />
      <P d="M339 300v54" c="#7a8020" w={6} dash="4 3" />
      <P d="M334 105h10M334 121h10" c={GR} />
      {lower && <P d="M420 141h176" c={B} />}
      <T x={406} y={73} t={["Pipa Refrigerant", "Kabel Power & Kontrol", "Dibawa naik shaft"]} s={8} />
      <T x={462} y={104} t="Hanger" s={8} />
      <T x={565} y={101} t="Ceiling Diffuser" s={7} />
      <T x={385} y={154} t="Plafon" s={8} />
      <T x={495} y={173} t="FCU" s={9} />
      <T x={218} y={150} t="Pipa Refrigerant" s={8} />
      <T x={218} y={166} t={["Kabel Power & Kontrol", "Dibawa pipa PVC # 3/4"]} s={8} />
    </>
  );
}

function RightSheet() {
  return (
    <g transform="translate(860 630) scale(0.3333)">
      <CeilingSection />
      <g transform="translate(112 0)"><Condenser /></g>
      <P d="M275 357h312M275 374h312M254 357v36h20V366" c={GR} w={5} />
      <P d="M275 361h30" c={G} w={4} />
      <P d="M300 361h38" c={Y} w={4} />
      <P d="M586 350v32M334 376v34M344 376v28M200 421h88l20-58M346 300l22-20h68M500 356v-8h28" />
      <T x={385} y={278} t={["Besi Support", "L 50x50x5"]} s={9} />
      <T x={271} y={346} t="Saluran" s={8} />
      <T x={504} y={346} t="+0.00" s={8} />
      <T x={200} y={416} t="Pipa PVC # 3/4 (k)" s={8} />
      <T x={200} y={430} t={["Pipa Kondensat", "Dibawah lantai"]} s={8} />
      <Title x={455} y={431} a="POTONGAN LT. SATU" b={'TYPICAL "4"'} w={164} />
      <g transform="translate(0 490)"><CeilingSection lower /></g>
      <P d="M275 866v-10h63v-8h248" c={GR} />
      <P d="M170 874h40v12h26v-16h-26M252 872v18c6 8 18 4 18-4v-24M236 872h16" c={GR} />
      <P d="M209 838h20v30h-20zM188 854l8 8 8-10M236 880c4 20 20 16 40 16h63" c={G} w={4} dash="6 3" />
      <P d="M170 872v22M586 846v32M147 917h52l12-38M192 945h92l14-46M246 804l64 56" />
      <T x={147} y={913} t="Pondasi beton" s={7} />
      <T x={192} y={933} t={["Saluran", "Pipa PVC # 3/4 (k)"]} s={8} />
      <T x={183} y={782} t={["Pipa Kondensat", "Dibawah lantai", "PVC # 3/4"]} s={8} />
      <Title x={455} y={943} a="POTONGAN LT. DASAR" b={'TYPICAL "3"'} w={164} />
    </g>
  );
}

function Grid() {
  const step = 129.7 / 5;
  const lines = Array.from({ length: 120 }, (_, i) => i);
  const line = (vertical: boolean, i: number) => {
    const p = Math.round((vertical ? 126.3 : 276.3) + (i - 5) * step);
    return <path key={`${vertical}${i}`} d={vertical ? `M${p}.5 0V2400` : `M0 ${p}.5H4000`} stroke={i % 5 === 0 ? "#2e3547" : "#262d38"} />;
  };
  return (
    <>
      {lines.filter((i) => i % 5).map((i) => [line(true, i), line(false, i)])}
      {lines.filter((i) => i % 5 === 0).map((i) => [line(true, i), line(false, i)])}
    </>
  );
}

function Drawing() {
  return (
    <svg className="absolute inset-0 h-full w-full" aria-label="Model space">
      <g transform="translate(0 -173)">
        <Grid />
        <Frame x={757} y={179} c="#1c1cc8" side="#2c3aa0" caption={["DETAIL SUPPORT BRACKET AC", "OUTDOOR UNIT"]} />
        <Frame x={181} y={612} c="#1c28d0" side="#1414d0" caption={["DETAIL CONDUIT AC SPLIT", "TYPE WALL MOUNTED"]} />
        <Frame x={757} y={612} c="#1414d8" side="#1010b0" caption={["DETAIL CONDUIT AC SPLIT", "TYPE CEILING MOUNTED"]} />
        <g transform="translate(780 190) scale(0.3333)">
          <Diffusers />
          <Foundation />
          <Bracket />
        </g>
        <LeftSheet />
        <RightSheet />
        <g stroke="#f0f0f0" fill="none">
          <path d="M20.500 932v45M26 981.500h45M16.500 977.500h10v9h-10zM21 977v5h5M23 915l5.500 7 5.500-7M28.500 922v6M75 969l12 11M87 969l-12 11" />
        </g>
      </g>
    </svg>
  );
}

/* ---------- viewport overlays ---------- */

function ViewCube() {
  return (
    <div className="absolute top-[35px] right-[12px] flex w-[142px] flex-col items-center">
      <svg width="142" height="142" viewBox="0 0 142 142" aria-label="View cube" fontFamily="'Liberation Sans', sans-serif">
        <circle cx="71" cy="71" r="54" fill="none" stroke="#4b4b4b" strokeWidth="12" />
        <rect x="45" y="45" width="52" height="52" fill="#aab0b0" stroke="#7e8484" />
        <rect x="55" y="55" width="32" height="32" fill="#a2a2a4" />
        <g textAnchor="middle" fontWeight="700" fill="#a8a8a8" fontSize="22">
          <text x="71" y="23">N</text>
          <text x="15" y="79">W</text>
          <text x="127" y="79">E</text>
          <text x="71" y="136">S</text>
          <text x="71" y="75" fontSize="12" fill="#4a4a4c" fontFamily="'Open Sans', sans-serif">TOP</text>
        </g>
      </svg>
      <button className="mt-4 flex h-[18px] w-12 items-center justify-between rounded border border-[#777] bg-[#9a9a9a] px-1 font-['Liberation_Sans',sans-serif] text-[11px] text-[#555]">
        WCS
        <Svg s={8}><path d="M0 2h8L4 6z" stroke="#ccc" strokeWidth="0.8" /></Svg>
      </button>
    </div>
  );
}

function NavBar() {
  return (
    <div className="absolute top-[236px] right-[4px] h-[212px] w-8 rounded border border-[#6a6a6a] bg-[#5c5c5c]">
      <svg width="30" height="210" viewBox="0 0 30 210" fill="none" stroke="#404040" strokeWidth="1.200" aria-label="Navigation bar">
        <circle cx="25" cy="5" r="3.500" fill="#484848" />
        <path d="M23 3l4 4M27 3l-4 4" stroke="#777" />
        <path d="M15 19h11v11a11 11 0 1 1-11-11z" />
        <circle cx="15" cy="30" r="6" />
        <path d="M10 34l-3 4M20 34l3 4M3 56h24M3 164h24" stroke="#4c4c4c" />
        <path d="M12 49h6l-3 3zM12 119h6l-3 3zM12 157h6l-3 3z" fill="#333" stroke="none" />
        <path d="M10 83c-2-5-6-9-6-10 1-2 4 0 5 2l-2-9c1-2 3-1 3 1l2 6v-9c1-2 3-2 3 0l1 9 2-8c1-2 3-1 3 1l-2 9 3-4c2-1 3 0 2 2-3 4-2 7-5 10z" />
        <path d="M4 90l14 14M18 90L4 104M4 94v-4h4M14 90h4v4M4 100v4h4" />
        <circle cx="19" cy="104" r="5" />
        <path d="M22 108l5 5" strokeWidth="3" />
        <path d="M13 149v-16h-3l4-5 4 5h-3v16zM11 136c-12 2-8 8 4 7 12 0 14-6 4-8M8 139l-4 4 5 2" />
        <path d="M4 170h6v6H4zM12 170h6v6h-6zM20 170h6v6h-6zM4 179h16v13H4z" />
        <path d="M8 181v9l7-4z" fill="#333" />
        <circle cx="25" cy="205" r="3.500" />
      </svg>
    </div>
  );
}

function CommandArea() {
  return (
    <div className="absolute bottom-px left-[566px] flex w-[787px] flex-col font-['DejaVu_Sans_Mono','Liberation_Mono',monospace] text-xs">
      <div className="flex flex-col items-start gap-1 pb-[3px] pl-[62px] text-[#f2f2f2]">
        <p className="rounded-sm bg-[#5f5f5f]/85 px-0.5 leading-[15px] whitespace-pre text-[#b8b8b8]">
          {"Autodesk DWG.  This file is a TrustedDWG last saved by an Autodesk application or Autodesk licensed\napplication."}
        </p>
        <p className="rounded-sm bg-[#666] px-0.5 leading-4 text-[#dcdcdc]">Command:</p>
        <p className="rounded-sm bg-[#666] px-0.5 leading-4">Command:</p>
      </div>
      <div className="flex h-[26px]">
        <div className="flex w-14 items-center justify-between rounded-l-sm bg-linear-to-b from-[#6c6c6c] to-[#444] pl-1 pr-2">
          <Svg s={8}><path d="M2 0v8M6 0v8" stroke="#999" strokeWidth="2" strokeDasharray="2 1" /></Svg>
          <button aria-label="Close"><Svg s={10}><path d="M1 1l8 8M9 1L1 9" stroke="#ccc" strokeWidth="2" /></Svg></button>
          <button aria-label="Customize"><Svg s={14}><path d="M1 13l7-7" stroke="#ccc" strokeWidth="2" /><path d="M8 1v5h5M7 6c-1-3 0-5 3-5M8 6c2 2 5 1 5-2" stroke="#ccc" strokeWidth="1.500" /></Svg></button>
        </div>
        <label className="flex flex-1 items-center gap-1 bg-[#c4c4c8]/95 px-1 text-[#777]">
          <svg width="16" height="12" viewBox="0 0 16 12" fill="none" aria-hidden="true"><path d="M.5.5h15v11H.5z" stroke="#555" /><path d="M3 3l3 2.500L3 8M7 9h4" stroke="#444" /></svg>
          <Caret className="text-[#666]" />
          <input aria-label="Command" placeholder="Type a command" className="flex-1 bg-transparent pl-0.5 italic outline-none placeholder:text-[#7c7c7c]" />
          <Caret className="rotate-180 text-[#222]" />
        </label>
      </div>
    </div>
  );
}

function Viewport() {
  return (
    <main className="relative min-h-[600px] flex-1 border-r-[7px] border-[#dbe5f1] bg-[#212830]">
      <Drawing />
      <div className="relative flex h-7 items-center justify-between pl-1 pr-3 text-xs text-[#e6e6e6]">
        <span>[−][Top][2D Wireframe]</span>
        <span className="flex items-center gap-2.5">
          <button aria-label="Minimize view"><Svg s={10}><path d="M0 8h10" stroke="#fff" strokeWidth="3" /></Svg></button>
          <button aria-label="Restore view"><Svg s={10}><path d="M1 4h5v5H1z" stroke="#fff" strokeWidth="2" /><path d="M3 1h6v6" stroke="#fff" /></Svg></button>
          <button aria-label="Close view"><Svg s={10}><path d="M1 1l8 8M9 1L1 9" stroke="#fff" strokeWidth="2" /></Svg></button>
        </span>
      </div>
      <ViewCube />
      <NavBar />
      <CommandArea />
    </main>
  );
}

/* ---------- bottom bar ---------- */

function Tool({ on, label, w = "w-[22px]", children }: Kids & { on?: boolean; label: string; w?: string }) {
  return (
    <button aria-label={label} className={`flex h-[22px] ${w} shrink-0 items-center justify-center ${on ? "bg-[#5b92c6]" : ""}`}>
      {children}
    </button>
  );
}
const Group = ({ children, w }: Kids & { w: string }) => (
  <div className={`flex h-[26px] ${w} shrink-0 items-center border border-[#8a8a8a] bg-[#525252] px-px`}>{children}</div>
);
const Drop = ({ label }: { label: string }) => (
  <button aria-label={label} className="flex h-[22px] flex-1 items-center justify-center"><Svg s={8}><path d="M0 2h8L4 7z" fill="#fff" /></Svg></button>
);
const Plane = "M8 1l2 7 4 6-6-3-6 3 4-6z";

function StatusBar() {
  return (
    <footer className="flex h-7 bg-[#383838] text-xs text-white">
      <div className="flex items-start pl-3">
        <button className="h-[17px] w-[58px] rounded-b-xl bg-[#6e7272] text-xs font-bold">Model</button>
        <button className="ml-0.5 h-[17px] w-[62px] rounded-b-xl border border-t-0 border-[#666] bg-[#505252] text-xs text-[#cfc4c8]">Layout1</button>
        <button aria-label="New layout" className="ml-1 flex h-[17px] w-6 items-center justify-center rounded-tl-md rounded-br-lg bg-[#585a5a]"><Svg s={8}><path d="M4 0v8M0 4h8" stroke="#ccc" strokeWidth="2" /></Svg></button>
      </div>
      <div className="ml-auto flex items-center gap-0.5">
        <Group w="w-[48px]"><button className="flex flex-1 justify-center">MODEL</button></Group>
        <Group w="w-[64px]">
          <Tool on label="Grid"><Svg s={16}><path d="M4 0v16M8 0v16M12 0v16M0 4h16M0 8h16M0 12h16" stroke="#fff" /></Svg></Tool>
          <Tool label="Snap"><Svg s={16}><path d="M2 3h14M2 8h14M2 13h14" stroke="#ddd" strokeWidth="2" strokeDasharray="2 3" /></Svg></Tool>
          <Drop label="Snap options" />
        </Group>
        <Group w="w-[167px]">
          <Tool label="Ortho"><Svg s={16}><path d="M1 0v15h15M1 10h5v5" stroke="#ddd" strokeWidth="1.300" /></Svg></Tool>
          <Tool on label="Polar"><Svg s={16}><circle cx="7" cy="9" r="6" stroke="#fff" /><path d="M7 9h9M7 9l7-8" stroke="#fff" /></Svg></Tool>
          <Drop label="Polar options" />
          <Tool label="Isodraft"><Svg s={16}><path d="M8 0v16" stroke="#3bc14a" /><path d="M1 1l14 14" stroke="#c46a5a" /><circle cx="8" cy="8" r="1.500" fill="#ddd" /></Svg></Tool>
          <Drop label="Isodraft options" />
          <Tool on label="Object snap tracking"><Svg s={16}><path d="M1 14h15M1 14L13 2" stroke="#fff" strokeWidth="1.300" /><path d="M5 9l5 1v4" stroke="#fff" /></Svg></Tool>
          <Tool on label="Object snap" w="ml-0.5 w-[22px]"><Svg s={16}><path d="M6 3h9v12H2V7M0 1h5v5H0z" stroke="#fff" strokeWidth="1.300" /></Svg></Tool>
          <Drop label="Object snap options" />
        </Group>
        <Group w="w-[106px]">
          <Tool on label="Annotation visibility"><Svg s={16}><path d={Plane} fill="#fff" /><circle cx="13" cy="3.500" r="2.500" stroke="#fff" /></Svg></Tool>
          <Tool label="Auto scale"><Svg s={16}><path d={Plane} fill="#ddd" /><path d="M14 0l-3 4h4l-3 4" stroke="#ddd" /></Svg></Tool>
          <Tool label="Annotation scale"><Svg s={16}><path d={Plane} fill="#ddd" /></Svg></Tool>
          <button className="ml-1 shrink-0 text-[11px]">1:1</button>
          <Drop label="Scale options" />
        </Group>
        <Group w="w-[44px]">
          <Tool label="Workspace"><Svg s={16}><circle cx="8" cy="8" r="4" stroke="#ddd" strokeWidth="3" /><circle cx="8" cy="8" r="6.500" stroke="#ddd" strokeWidth="2.500" strokeDasharray="3 2.100" /></Svg></Tool>
          <Drop label="Workspace options" />
        </Group>
        <Group w="w-[22px]"><Tool label="Annotation monitor" w="flex-1"><Svg s={16}><path d="M8 0v16M0 8h16" stroke="#eee" strokeWidth="1.500" /></Svg></Tool></Group>
        <Group w="w-[24px]"><Tool label="Isolate objects" w="flex-1"><Svg s={16}><path d="M1 1h6v6H1zM3 15l3-5 3 5z" stroke="#ddd" /><circle cx="12.500" cy="7" r="2.800" stroke="#ddd" /></Svg></Tool></Group>
        <Group w="w-[22px]"><Tool label="Trusted file" w="flex-1"><Svg s={16}><path d="M1 0h8l4 4v11H1z" fill="#9fd0f6" /><path d="M1 10h7v5H1z" fill="#e6dc3c" /><path d="M4 2v8M1 6h10" stroke="#fff" /><path d="M7 12l3 3 5-6" stroke="#19a81f" strokeWidth="2" /></Svg></Tool></Group>
        <Group w="w-[51px]">
          <Tool label="Clean screen"><Svg s={16}><path d="M1 2h14v12H1z" stroke="#ddd" /><path d="M4 8v4h4M12 8V4H8M4 12l2-2M12 4l-2 2" stroke="#ddd" /></Svg></Tool>
          <Tool label="Customization" w="flex-1"><Svg s={16}><path d="M0 2h16M0 8h16M0 14h16" stroke="#eee" strokeWidth="2" /></Svg></Tool>
        </Group>
      </div>
    </footer>
  );
}

export default function App() {
  return (
    <div className="relative flex min-h-screen flex-col overflow-hidden bg-[#383838] font-['Open_Sans','Noto_Sans',sans-serif]">
      <TitleBar />
      <AppButton />
      <MenuTabs />
      <Ribbon />
      <FileTabs />
      <Viewport />
      <StatusBar />
    </div>
  );
}
